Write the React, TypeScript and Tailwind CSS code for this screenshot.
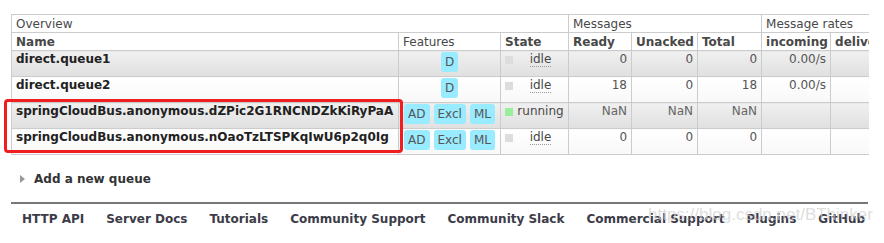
import React from "react";

type Queue = {
	name: string;
	features: string[];
	state: "idle" | "running";
	ready: string;
	unacked: string;
	total: string;
	incoming: string;
};

const QUEUES: Queue[] = [
	{ name: "direct.queue1", features: ["D"], state: "idle", ready: "0", unacked: "0", total: "0", incoming: "0.00/s" },
	{ name: "direct.queue2", features: ["D"], state: "idle", ready: "18", unacked: "0", total: "18", incoming: "0.00/s" },
	{
		name: "springCloudBus.anonymous.dZPic2G1RNCNDZkKiRyPaA",
		features: ["AD", "Excl", "ML"],
		state: "running",
		ready: "NaN",
		unacked: "NaN",
		total: "NaN",
		incoming: "",
	},
	{
		name: "springCloudBus.anonymous.nOaoTzLTSPKqIwU6p2q0Ig",
		features: ["AD", "Excl", "ML"],
		state: "idle",
		ready: "0",
		unacked: "0",
		total: "0",
		incoming: "",
	},
];

const FOOTER = [
	"HTTP API",
	"Server Docs",
	"Tutorials",
	"Community Support",
	"Community Slack",
	"Commercial Support",
	"Plugins",
	"GitHub",
];

const HEAD = "border border-[#ccc] px-[4px] h-[18px] leading-[16px] text-left align-middle";
const ALT1 = "bg-linear-to-b from-[#f0f0f0] to-[#e0e0e0]";
const ALT2 = "bg-linear-to-b from-[#ffffff] to-[#f8f8f8]";
const CELL = "border border-[#ccc] h-[26px] p-0 align-top leading-[16px]";

function Badge({ label }: { label: string }) {
	return (
		<span className="inline-block h-[20px] rounded-[3px] bg-[#99ebff] px-[4px] leading-[20px] text-[#555]">
			{label}
		</span>
	);
}

export default function App() {
	return (
		<div className="relative h-[243px] w-[884px] overflow-hidden bg-white font-['DejaVu_Sans',Verdana,sans-serif] text-[12px] text-[#484848]">
			{/* Queues table */}
			<div className="ml-[11px] mt-[14px] w-[858px] overflow-hidden">
				<table className="w-[969px] table-fixed border-collapse">
					<colgroup>
						<col className="w-[387px]" />
						<col className="w-[102px]" />
						<col className="w-[68px]" />
						<col className="w-[63px]" />
						<col className="w-[66px]" />
						<col className="w-[64px]" />
						<col className="w-[69px]" />
						<col className="w-[80px]" />
						<col className="w-[70px]" />
					</colgroup>
					<thead>
						<tr>
							<th colSpan={3} className={`${HEAD} font-normal`}>Overview</th>
							<th colSpan={3} className={`${HEAD} font-normal`}>Messages</th>
							<th colSpan={3} className={`${HEAD} font-normal`}>Message rates</th>
						</tr>
						<tr>
							<th className={`${HEAD} font-bold`}>Name</th>
							<th className={`${HEAD} font-normal`}>Features</th>
							<th className={`${HEAD} font-bold`}>State</th>
							<th className={`${HEAD} font-bold`}>Ready</th>
							<th className={`${HEAD} font-bold`}>Unacked</th>
							<th className={`${HEAD} font-bold`}>Total</th>
							<th className={`${HEAD} font-bold`}>incoming</th>
							<th className={`${HEAD} font-bold whitespace-nowrap`}>deliver / get</th>
							<th className={`${HEAD} font-bold`}>ack</th>
						</tr>
					</thead>
					<tbody>
						{QUEUES.map((q, i) => {
							const bg = i % 2 === 0 ? ALT1 : ALT2;
							const num = q.ready === "NaN" ? "text-[#666]" : "text-[#555]";
							return (
								<tr key={q.name}>
									<td className={`${CELL} ${bg} px-[4px] font-bold text-[#222] whitespace-nowrap`}>{q.name}</td>
									<td className={`${CELL} ${bg} pt-[1px]`}>
										<div className="flex justify-center gap-[4px]">
											{q.features.map((f) => (
												<Badge key={f} label={f} />
											))}
										</div>
									</td>
									<td className={`${CELL} ${bg} pl-[4px]`}>
										<div className="flex items-start pt-[0px]">
											<span
												className={`mt-[5px] h-[8px] w-[8px] shrink-0 ${
													q.state === "running" ? "bg-[#99ee99]" : "bg-[#dddddd]"
												}`}
											/>
											<div className="flex-1 text-center">
												{q.state === "idle" ? (
													<span className="border-b border-dotted border-[#999]">idle</span>
												) : (
													<span>running</span>
												)}
											</div>
										</div>
									</td>
									<td className={`${CELL} ${bg} ${num} pr-[4px] text-right`}>{q.ready}</td>
									<td className={`${CELL} ${bg} ${num} pr-[4px] text-right`}>{q.unacked}</td>
									<td className={`${CELL} ${bg} ${num} pr-[4px] text-right`}>{q.total}</td>
									<td className={`${CELL} ${bg} pr-[4px] text-right text-[#555]`}>{q.incoming}</td>
									<td className={`${CELL} ${bg}`} />
									<td className={`${CELL} ${bg}`} />
								</tr>
							);
						})}
					</tbody>
				</table>
			</div>

			{/* Add a new queue */}
			<div className="ml-[20px] mt-[16px] flex h-[16px] items-center gap-[9px] leading-[16px]">
				<span className="h-0 w-0 border-y-[4px] border-l-[5px] border-y-transparent border-l-[#999]" />
				<span className="font-bold text-[#333]">Add a new queue</span>
			</div>

			{/* Footer */}
			<div className="ml-[11px] mt-[15px] w-[857px] border-t-2 border-[#777]" />
			<nav className="ml-[11px] mt-[7px] flex leading-[16px]">
				{FOOTER.map((l) => (
					<a key={l} className="px-[11px] font-bold text-[#3c3c48]">
						{l}
					</a>
				))}
			</nav>

			{/* Highlight box */}
			<div className="absolute left-[4px] top-[99px] h-[54px] w-[399px] rounded-[4px] border-[3px] border-[#f01e1e]" />

			{/* Watermark */}
			<div className="absolute left-[648px] top-[204px] font-['Liberation_Sans',Arial,sans-serif] text-[17px] leading-[22px] text-[#cfcfcf]/70">
				https://blog.csdn.net/BThinker
			</div>
		</div>
	);
}
